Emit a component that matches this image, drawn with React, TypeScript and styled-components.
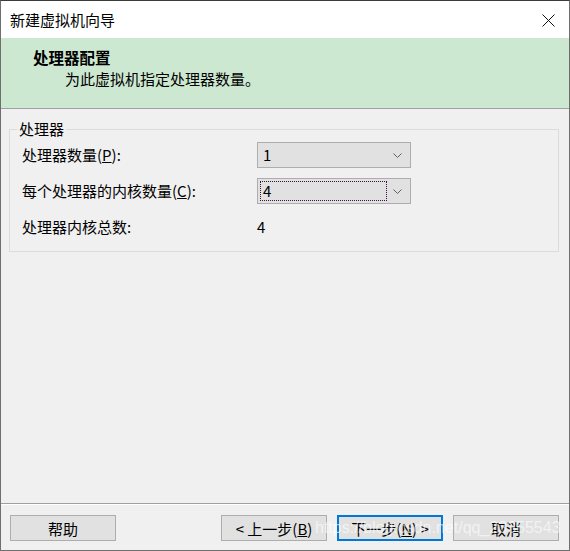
import React from 'react';
import styled, { createGlobalStyle } from 'styled-components';

const GlobalStyle = createGlobalStyle`
  html, body {
    margin: 0;
    padding: 0;
    background: #f0f0f0;
  }
  body {
    font-family: "Noto Sans CJK SC", "Noto Sans", sans-serif;
    font-size: 15px;
    color: #000;
  }
`;

type RowData = {
  label: string;
  hotkey?: string;
  value: string;
  select: boolean;
  focused?: boolean;
};

const rows: RowData[] = [
  { label: '处理器数量', hotkey: 'P', value: '1', select: true },
  { label: '每个处理器的内核数量', hotkey: 'C', value: '4', select: true, focused: true },
  { label: '处理器内核总数', value: '4', select: false },
];

function Chevron() {
  return (
    <svg width='9' height='5' viewBox='0 0 9 5'>
      <polyline points='0.5,0.5 4.5,4.5 8.5,0.5' fill='none' stroke='#606060' strokeWidth='1' />
    </svg>
  );
}

function Combo({ value, focused }: { value: string; focused?: boolean }) {
  return (
    <ComboBox>
      <ComboValue $focused={focused}>{value}</ComboValue>
      <ComboArrow>
        <Chevron />
      </ComboArrow>
    </ComboBox>
  );
}

function App() {
  return (
    <>
      <GlobalStyle />
      <Window>
        <TitleBar>
          <Title>新建虚拟机向导</Title>
          <CloseBtn>
            <svg width='13' height='13' viewBox='0 0 13 13'>
              <line x1='0.5' y1='0.5' x2='12.5' y2='12.5' stroke='#111' strokeWidth='1' />
              <line x1='12.5' y1='0.5' x2='0.5' y2='12.5' stroke='#111' strokeWidth='1' />
            </svg>
          </CloseBtn>
        </TitleBar>
        <Header>
          <HeaderTitle>处理器配置</HeaderTitle>
          <HeaderSub>为此虚拟机指定处理器数量。</HeaderSub>
        </Header>
        <Body>
          <Group>
            <Legend>处理器</Legend>
            {rows.map((r) => (
              <Row key={r.label}>
                <Label>
                  {r.label}
                  {r.hotkey ? (
                    <>
                      (<u>{r.hotkey}</u>)
                    </>
                  ) : null}
                  :
                </Label>
                {r.select ? <Combo value={r.value} focused={r.focused} /> : <PlainValue>{r.value}</PlainValue>}
              </Row>
            ))}
          </Group>
        </Body>
        <Footer>
          <Button>帮助</Button>
          <Spacer />
          <Button>
            &lt; 上一步(<u>B</u>)
          </Button>
          <Button $primary>
            下一步(<u>N</u>) &gt;
          </Button>
          <Button>取消</Button>
          <Watermark>https://blog.csdn.net/qq_23355543</Watermark>
        </Footer>
      </Window>
    </>
  );
}

const Window = styled.div`
  position: relative;
  width: 570px;
  height: 551px;
  box-sizing: border-box;
  border: 1px solid #6f6f6f;
  border-top-color: #3a3a3a;
  display: flex;
  flex-direction: column;
  background: #f0f0f0;
  overflow: hidden;
`;

const TitleBar = styled.div`
  height: 37px;
  background: #fff;
  display: flex;
  align-items: center;
  justify-content: space-between;
  padding: 0 14px 0 9px;
`;

const Title = styled.div`
  font-size: 15px;
  line-height: 20px;
`;

const CloseBtn = styled.div`
  display: flex;
  align-items: center;
  margin-top: 1px;
`;

const Header = styled.div`
  height: 71px;
  box-sizing: border-box;
  background: #cde8d0;
  border-bottom: 1px solid #a0a0a0;
  padding: 8px 0 0 32px;
`;

const HeaderTitle = styled.div`
  font-weight: bold;
  font-size: 15.5px;
  line-height: 22px;
`;

const HeaderSub = styled.div`
  font-size: 15px;
  line-height: 22px;
  padding-left: 32px;
`;

const Body = styled.div`
  flex: 1;
  padding: 9px 10px 0 8px;
`;

const Group = styled.fieldset`
  margin: 0;
  border: 1px solid #dcdcdc;
  padding: 2px 12px 11px 12px;
  display: flex;
  flex-direction: column;
  gap: 10px;
`;

const Legend = styled.legend`
  padding: 0 2px;
  margin-left: -5px;
  line-height: 22px;
`;

const Row = styled.div`
  display: flex;
  align-items: center;
  height: 26px;
`;

const Label = styled.div`
  width: 235px;
  line-height: 20px;
`;

const PlainValue = styled.div`
  line-height: 20px;
`;

const ComboBox = styled.div`
  width: 154px;
  height: 26px;
  box-sizing: border-box;
  border: 1px solid #adadad;
  background: #e1e1e1;
  display: flex;
  align-items: center;
  padding: 2px;
`;

const ComboValue = styled.div<{ $focused?: boolean }>`
  flex: 1;
  height: 20px;
  box-sizing: border-box;
  line-height: 18px;
  padding-left: 2px;
  border: 1px dotted ${(p) => (p.$focused ? '#3a0f3a' : 'transparent')};
`;

const ComboArrow = styled.div`
  width: 21px;
  display: flex;
  justify-content: center;
  align-items: center;
`;

const Footer = styled.div`
  position: relative;
  border-top: 1px solid #a0a0a0;
  box-shadow: inset 0 1px 0 #fff;
  padding: 11px 10px 9px 9px;
  display: flex;
  gap: 10px;
`;

const Spacer = styled.div`
  flex: 1;
`;

const Button = styled.div<{ $primary?: boolean }>`
  width: 106px;
  height: 26px;
  box-sizing: border-box;
  background: #e1e1e1;
  border: ${(p) => (p.$primary ? '2px solid #0078d7' : '1px solid #adadad')};
  display: flex;
  align-items: center;
  justify-content: center;
  font-size: 15px;
  white-space: pre;
`;

const Watermark = styled.div`
  position: absolute;
  left: 314px;
  top: 14px;
  font-family: "Liberation Sans", Arial, sans-serif;
  font-size: 16px;
  line-height: 20px;
  color: rgba(255, 255, 255, 0.6);
  pointer-events: none;
  white-space: nowrap;
`;

export default App;
